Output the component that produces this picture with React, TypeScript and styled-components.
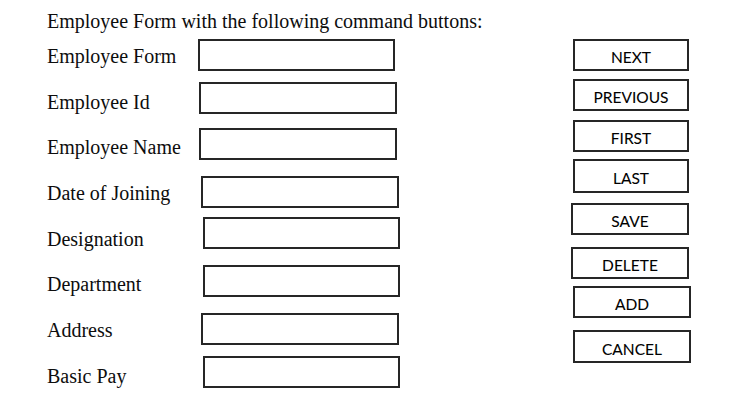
import React from "react";
import styled, { createGlobalStyle } from "styled-components";

const GlobalStyle = createGlobalStyle`
  html, body {
    margin: 0;
    padding: 0;
    background: #ffffff;
  }
  body {
    font-family: "Liberation Serif", "Times New Roman", serif;
    color: #111111;
  }
`;

const Page = styled.div`
  width: 741px;
  height: 417px;
  box-sizing: border-box;
  padding: 10px 0 0 47px;
  overflow: hidden;
`;

const Title = styled.div`
  font-family: "Liberation Serif", "Times New Roman", serif;
  font-size: 20px;
  line-height: 22px;
  height: 22px;
  color: #0d0d0d;
  white-space: nowrap;
`;

const Body = styled.div`
  display: flex;
  flex-direction: row;
  align-items: flex-start;
`;

const LabelList = styled.div`
  display: flex;
  flex-direction: column;
  width: 151px;
  margin-top: 2px;
`;

const Label = styled.div`
  font-family: "Liberation Serif", "Times New Roman", serif;
  font-size: 20px;
  line-height: 45.7px;
  height: 45.7px;
  white-space: nowrap;
  color: #0d0d0d;
`;

const FieldList = styled.div`
  display: flex;
  flex-direction: column;
  width: 205px;
`;

const Field = styled.input<{ $top: number; $left: number; $w: number }>`
  display: block;
  box-sizing: border-box;
  width: ${(p) => p.$w}px;
  height: 32px;
  margin: ${(p) => p.$top}px 0 0 ${(p) => p.$left}px;
  border: 2px solid #262626;
  background: #ffffff;
  padding: 0 6px;
  outline: none;
  font-family: "Liberation Serif", serif;
  font-size: 16px;
`;

const ButtonList = styled.div`
  display: flex;
  flex-direction: column;
  margin-left: 168px;
`;

const CommandButton = styled.button<{
  $top: number;
  $left: number;
  $w: number;
  $h: number;
}>`
  display: flex;
  align-items: center;
  justify-content: center;
  box-sizing: border-box;
  width: ${(p) => p.$w}px;
  height: ${(p) => p.$h}px;
  margin: ${(p) => p.$top}px 0 0 ${(p) => p.$left}px;
  padding: 6px 0 0 0;
  border: 2px solid #262626;
  background: #ffffff;
  font-family: Lato, "Open Sans", sans-serif;
  font-size: 15.5px;
  line-height: 1;
  color: #000000;
  -webkit-text-stroke: 0.08px #000000;
  cursor: pointer;
`;

const labels = [
  "Employee Form",
  "Employee Id",
  "Employee Name",
  "Date of Joining",
  "Designation",
  "Department",
  "Address",
  "Basic Pay",
];

const fields = [
  { top: 7, left: 0, w: 197 },
  { top: 11, left: 1, w: 198 },
  { top: 14, left: 1, w: 198 },
  { top: 16, left: 3, w: 198 },
  { top: 9, left: 5, w: 197 },
  { top: 16, left: 5, w: 197 },
  { top: 16, left: 3, w: 198 },
  { top: 11, left: 5, w: 197 },
];

const buttons = [
  { text: "NEXT", top: 7, left: 2, w: 116, h: 32 },
  { text: "PREVIOUS", top: 8, left: 2, w: 116, h: 32 },
  { text: "FIRST", top: 9, left: 2, w: 116, h: 32 },
  { text: "LAST", top: 7, left: 2, w: 116, h: 34 },
  { text: "SAVE", top: 10, left: 0, w: 118, h: 32 },
  { text: "DELETE", top: 12, left: 0, w: 118, h: 32 },
  { text: "ADD", top: 7, left: 2, w: 118, h: 32 },
  { text: "CANCEL", top: 12, left: 2, w: 118, h: 33 },
];

export default function App() {
  return (
    <>
      <GlobalStyle />
      <Page>
        <Title>Employee Form with the following command buttons:</Title>
        <Body>
          <LabelList>
            {labels.map((l) => (
              <Label key={l}>{l}</Label>
            ))}
          </LabelList>
          <FieldList>
            {fields.map((f, i) => (
              <Field
                key={i}
                type="text"
                aria-label={labels[i]}
                $top={f.top}
                $left={f.left}
                $w={f.w}
              />
            ))}
          </FieldList>
          <ButtonList>
            {buttons.map((b) => (
              <CommandButton
                key={b.text}
                type="button"
                $top={b.top}
                $left={b.left}
                $w={b.w}
                $h={b.h}
              >
                {b.text}
              </CommandButton>
            ))}
          </ButtonList>
        </Body>
      </Page>
    </>
  );
}
